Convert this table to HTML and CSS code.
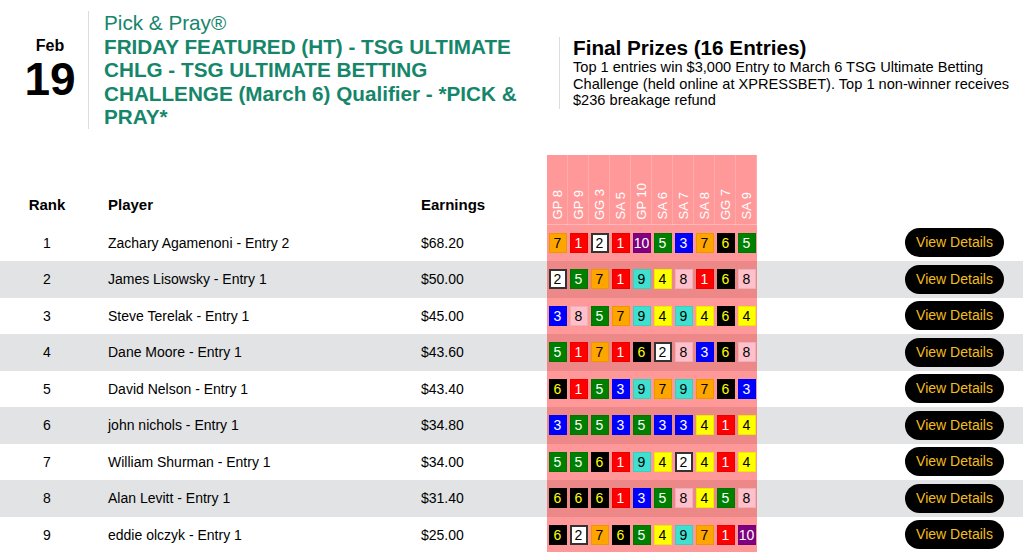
FILE: index.html
```html
<!DOCTYPE html>
<html lang="en">
<head>
<meta charset="utf-8">
<title>Pick &amp; Pray Leaderboard</title>
<link rel="stylesheet" href="styles.css">
</head>
<body>
<header class="event">
  <div class="date">
    <div class="mon">Feb</div>
    <div class="day">19</div>
  </div>
  <div class="title">
    <div class="brand">Pick &amp; Pray®</div>
    <h1>FRIDAY FEATURED (HT) - TSG ULTIMATE CHLG - TSG ULTIMATE BETTING CHALLENGE (March 6) Qualifier - *PICK &amp; PRAY*</h1>
  </div>
  <div class="prizes">
    <h2>Final Prizes (16 Entries)</h2>
    <p>Top 1 entries win $3,000 Entry to March 6 TSG Ultimate Betting Challenge (held online at XPRESSBET). Top 1 non-winner receives $236 breakage refund</p>
  </div>
</header>

<table class="board">
  <colgroup>
    <col class="c-rank"><col class="c-player"><col class="c-earn">
    <col class="c-race"><col class="c-race"><col class="c-race"><col class="c-race"><col class="c-race">
    <col class="c-race"><col class="c-race"><col class="c-race"><col class="c-race"><col class="c-race">
    <col>
  </colgroup>
  <thead>
    <tr>
      <th class="rank">Rank</th>
      <th class="player">Player</th>
      <th class="earn">Earnings</th>
      <th class="race"><span>GP 8</span></th>
      <th class="race"><span>GP 9</span></th>
      <th class="race"><span>GG 3</span></th>
      <th class="race"><span>SA 5</span></th>
      <th class="race"><span>GP 10</span></th>
      <th class="race"><span>SA 6</span></th>
      <th class="race"><span>SA 7</span></th>
      <th class="race"><span>SA 8</span></th>
      <th class="race"><span>GG 7</span></th>
      <th class="race"><span>SA 9</span></th>
      <th class="act"></th>
    </tr>
  </thead>
  <tbody>
    <tr>
      <td class="rank">1</td><td class="player">Zachary Agamenoni - Entry 2</td><td class="earn">$68.20</td>
      <td class="pick"><b class="p7">7</b></td><td class="pick"><b class="p1">1</b></td><td class="pick"><b class="p2">2</b></td><td class="pick"><b class="p1">1</b></td><td class="pick"><b class="p10">10</b></td>
      <td class="pick"><b class="p5">5</b></td><td class="pick"><b class="p3">3</b></td><td class="pick"><b class="p7">7</b></td><td class="pick"><b class="p6">6</b></td><td class="pick"><b class="p5">5</b></td>
      <td class="act"><a class="btn">View Details</a></td>
    </tr>
    <tr>
      <td class="rank">2</td><td class="player">James Lisowsky - Entry 1</td><td class="earn">$50.00</td>
      <td class="pick"><b class="p2">2</b></td><td class="pick"><b class="p5">5</b></td><td class="pick"><b class="p7">7</b></td><td class="pick"><b class="p1">1</b></td><td class="pick"><b class="p9">9</b></td>
      <td class="pick"><b class="p4">4</b></td><td class="pick"><b class="p8">8</b></td><td class="pick"><b class="p1">1</b></td><td class="pick"><b class="p6">6</b></td><td class="pick"><b class="p8">8</b></td>
      <td class="act"><a class="btn">View Details</a></td>
    </tr>
    <tr>
      <td class="rank">3</td><td class="player">Steve Terelak - Entry 1</td><td class="earn">$45.00</td>
      <td class="pick"><b class="p3">3</b></td><td class="pick"><b class="p8">8</b></td><td class="pick"><b class="p5">5</b></td><td class="pick"><b class="p7">7</b></td><td class="pick"><b class="p9">9</b></td>
      <td class="pick"><b class="p4">4</b></td><td class="pick"><b class="p9">9</b></td><td class="pick"><b class="p4">4</b></td><td class="pick"><b class="p6">6</b></td><td class="pick"><b class="p4">4</b></td>
      <td class="act"><a class="btn">View Details</a></td>
    </tr>
    <tr>
      <td class="rank">4</td><td class="player">Dane Moore - Entry 1</td><td class="earn">$43.60</td>
      <td class="pick"><b class="p5">5</b></td><td class="pick"><b class="p1">1</b></td><td class="pick"><b class="p7">7</b></td><td class="pick"><b class="p1">1</b></td><td class="pick"><b class="p6">6</b></td>
      <td class="pick"><b class="p2">2</b></td><td class="pick"><b class="p8">8</b></td><td class="pick"><b class="p3">3</b></td><td class="pick"><b class="p6">6</b></td><td class="pick"><b class="p8">8</b></td>
      <td class="act"><a class="btn">View Details</a></td>
    </tr>
    <tr>
      <td class="rank">5</td><td class="player">David Nelson - Entry 1</td><td class="earn">$43.40</td>
      <td class="pick"><b class="p6">6</b></td><td class="pick"><b class="p1">1</b></td><td class="pick"><b class="p5">5</b></td><td class="pick"><b class="p3">3</b></td><td class="pick"><b class="p9">9</b></td>
      <td class="pick"><b class="p7">7</b></td><td class="pick"><b class="p9">9</b></td><td class="pick"><b class="p7">7</b></td><td class="pick"><b class="p6">6</b></td><td class="pick"><b class="p3">3</b></td>
      <td class="act"><a class="btn">View Details</a></td>
    </tr>
    <tr>
      <td class="rank">6</td><td class="player">john nichols - Entry 1</td><td class="earn">$34.80</td>
      <td class="pick"><b class="p3">3</b></td><td class="pick"><b class="p5">5</b></td><td class="pick"><b class="p5">5</b></td><td class="pick"><b class="p3">3</b></td><td class="pick"><b class="p5">5</b></td>
      <td class="pick"><b class="p3">3</b></td><td class="pick"><b class="p3">3</b></td><td class="pick"><b class="p4">4</b></td><td class="pick"><b class="p1">1</b></td><td class="pick"><b class="p4">4</b></td>
      <td class="act"><a class="btn">View Details</a></td>
    </tr>
    <tr>
      <td class="rank">7</td><td class="player">William Shurman - Entry 1</td><td class="earn">$34.00</td>
      <td class="pick"><b class="p5">5</b></td><td class="pick"><b class="p5">5</b></td><td class="pick"><b class="p6">6</b></td><td class="pick"><b class="p1">1</b></td><td class="pick"><b class="p9">9</b></td>
      <td class="pick"><b class="p4">4</b></td><td class="pick"><b class="p2">2</b></td><td class="pick"><b class="p4">4</b></td><td class="pick"><b class="p1">1</b></td><td class="pick"><b class="p4">4</b></td>
      <td class="act"><a class="btn">View Details</a></td>
    </tr>
    <tr>
      <td class="rank">8</td><td class="player">Alan Levitt - Entry 1</td><td class="earn">$31.40</td>
      <td class="pick"><b class="p6">6</b></td><td class="pick"><b class="p6">6</b></td><td class="pick"><b class="p6">6</b></td><td class="pick"><b class="p1">1</b></td><td class="pick"><b class="p3">3</b></td>
      <td class="pick"><b class="p5">5</b></td><td class="pick"><b class="p8">8</b></td><td class="pick"><b class="p4">4</b></td><td class="pick"><b class="p5">5</b></td><td class="pick"><b class="p8">8</b></td>
      <td class="act"><a class="btn">View Details</a></td>
    </tr>
    <tr>
      <td class="rank">9</td><td class="player">eddie olczyk - Entry 1</td><td class="earn">$25.00</td>
      <td class="pick"><b class="p6">6</b></td><td class="pick"><b class="p2">2</b></td><td class="pick"><b class="p7">7</b></td><td class="pick"><b class="p6">6</b></td><td class="pick"><b class="p5">5</b></td>
      <td class="pick"><b class="p4">4</b></td><td class="pick"><b class="p9">9</b></td><td class="pick"><b class="p7">7</b></td><td class="pick"><b class="p1">1</b></td><td class="pick"><b class="p10">10</b></td>
      <td class="act"><a class="btn">View Details</a></td>
    </tr>
  </tbody>
</table>
</body>
</html>
```

FILE: styles.css
```css
html, body {
  margin: 0;
  padding: 0;
  background: #fff;
  color: #000;
  font-family: "Liberation Sans", Arial, sans-serif;
}

.event {
  display: flex;
  align-items: stretch;
  padding-top: 11px;
}

.date {
  width: 76px;
  margin-left: 12px;
  border-right: 1px solid #dcdcdc;
  display: flex;
  flex-direction: column;
  align-items: center;
  justify-content: center;
  padding-top: 1px;
}
.date .mon {
  font-size: 16px;
  font-weight: bold;
  line-height: 18px;
}
.date .day {
  font-size: 46px;
  font-weight: bold;
  line-height: 48px;
}

.title {
  width: 440px;
  padding: 0 15px;
  color: #16866b;
}
.title .brand {
  font-size: 20.7px;
  line-height: 24px;
}
.title h1 {
  margin: 0;
  font-size: 20.7px;
  line-height: 23.4px;
  font-weight: bold;
}

.prizes {
  flex: 1;
  align-self: flex-start;
  margin-top: 26px;
  border-left: 1px solid #dcdcdc;
  padding-left: 13px;
}
.prizes h2 {
  margin: 0;
  font-size: 20.7px;
  line-height: 22px;
  font-weight: bold;
}
.prizes p {
  margin: 0;
  font-size: 14.6px;
  line-height: 16.5px;
}

.board {
  width: 1023px;
  margin-top: 26px;
  border-collapse: collapse;
  table-layout: fixed;
  font-size: 14px;
}
.c-rank { width: 94px; }
.c-player { width: 314px; }
.c-earn { width: 139px; }
.c-race { width: 21px; }

.board th {
  box-sizing: border-box;
  height: 70px;
  padding: 0 0 12px;
  vertical-align: bottom;
  text-align: left;
  font-size: 15px;
  font-weight: bold;
}
.board th.rank { text-align: center; }
.board th.player { padding-left: 14px; }
.board th.earn { padding-left: 13px; }

.board th.race {
  padding: 0 0 5px;
  text-align: center;
  background: rgba(255, 0, 0, 0.4);
  box-shadow: inset -1px 0 rgba(255, 255, 255, 0.18), inset 0 -1px rgba(255, 255, 255, 0.3);
  color: #fff;
  font-weight: normal;
  font-size: 13px;
  line-height: 0;
}
.board th.race span {
  display: inline-block;
  writing-mode: vertical-rl;
  transform: rotate(180deg);
  white-space: nowrap;
  line-height: 15px;
}

.board tbody tr { height: 36.5px; }
.board tbody tr:nth-child(even) { background: #e2e3e5; }
.board td {
  padding: 0;
  vertical-align: middle;
}
.board td.rank { text-align: center; }
.board td.player { padding-left: 14px; }
.board td.earn { padding-left: 13px; }
.board td.pick {
  background: rgba(255, 0, 0, 0.4);
}
.board td.act {
  text-align: right;
  padding-right: 19px;
}

.pick b {
  display: block;
  box-sizing: border-box;
  width: 18px;
  height: 20px;
  margin: 0 auto;
  border: 1px solid rgba(0, 0, 0, 0.08);
  font-weight: normal;
  font-size: 14px;
  line-height: 18px;
  text-align: center;
}
.p1 { background: #ff0000; color: #fff; }
.p2 { background: #fff; color: #000; border: 2px solid #333 !important; line-height: 16px !important; }
.p3 { background: #0000ff; color: #fff; }
.p4 { background: #ffff00; color: #000; }
.p5 { background: #008000; color: #fff; }
.p6 { background: #000; color: #ffff00; }
.p7 { background: #ffa500; color: #000; }
.p8 { background: #ffc0cb; color: #000; }
.p9 { background: #40e0d0; color: #000; }
.p10 { background: #800080; color: #fff; }

.btn {
  display: inline-block;
  width: 99px;
  height: 29px;
  line-height: 29px;
  border-radius: 15px;
  background: #000;
  color: #f3bd1c;
  text-align: center;
  font-size: 14px;
  vertical-align: middle;
}
```
